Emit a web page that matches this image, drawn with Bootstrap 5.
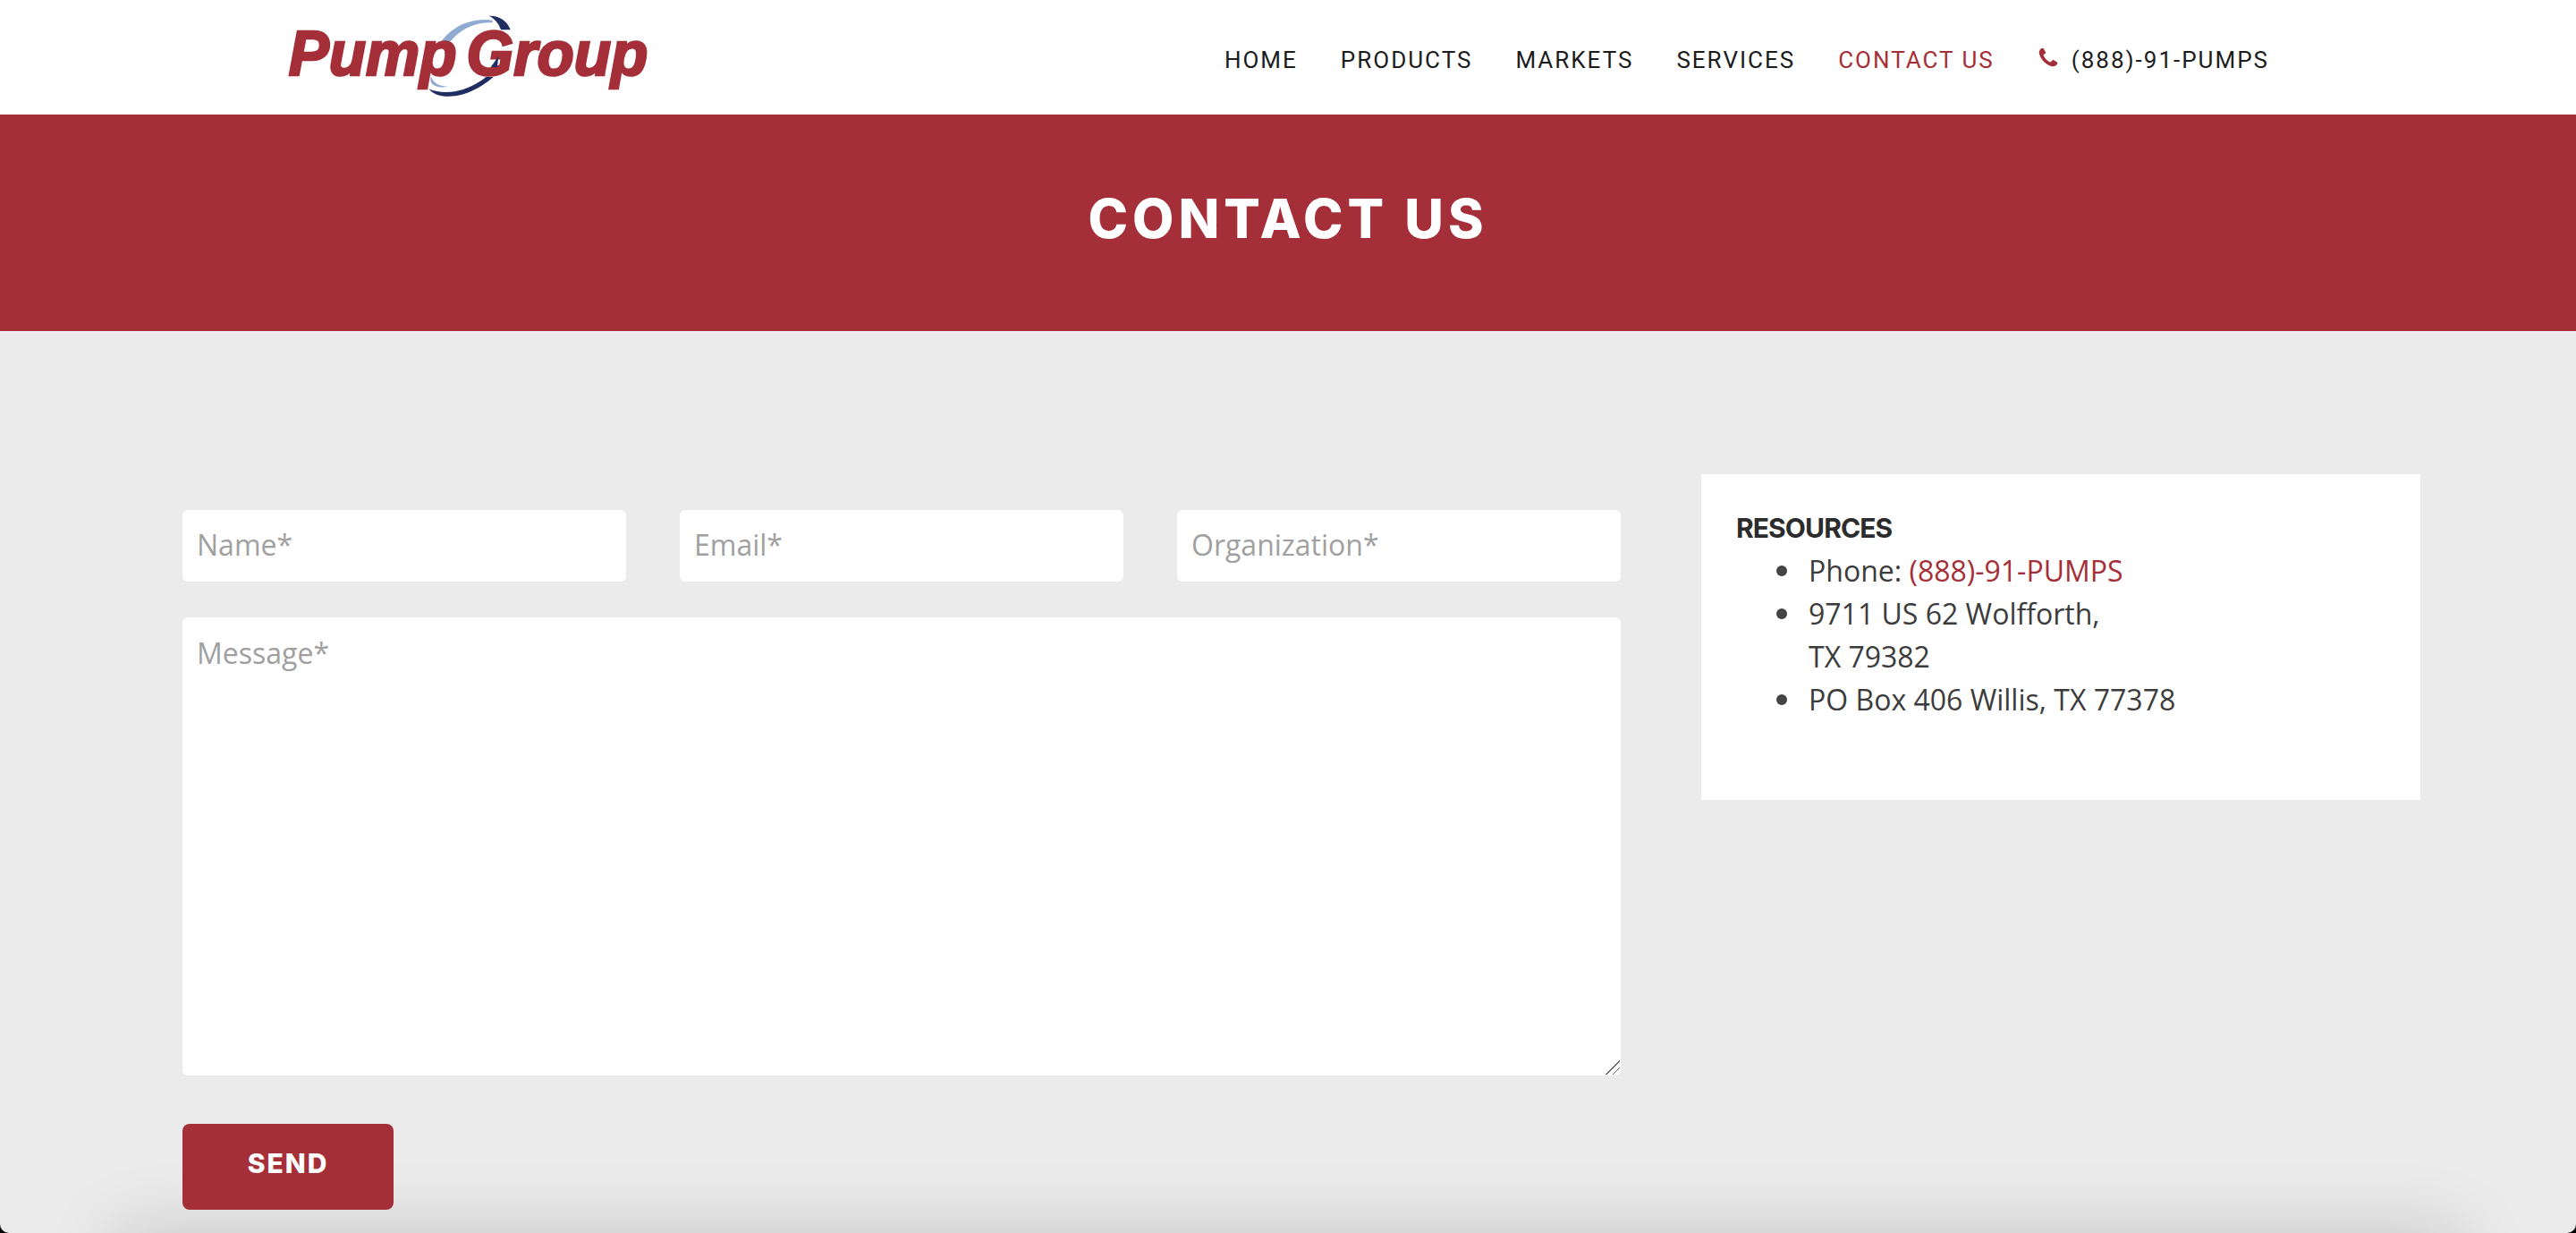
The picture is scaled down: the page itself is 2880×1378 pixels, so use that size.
<!DOCTYPE html>
<html lang="en">
<head>
<meta charset="utf-8">
<title>Contact Us - Pump Group</title>
<link href="https://cdn.jsdelivr.net/npm/bootstrap@5.3.0/dist/css/bootstrap.min.css" rel="stylesheet">
<style>
html, body { height: 100%; background: #000; overflow: hidden; }
.pg-page { height: 1378px; overflow: hidden; background: #ebebeb; border-radius: 0 0 10px 10px; font-family: "Open Sans", sans-serif; color: #3c3c3c; }
.pg-nav { height: 128px; padding: 0 343px 0 280px; background: #fff; }
.pg-nav .navbar-brand { padding: 0; margin: 0; display: block; height: 128px; }
.pg-logo { display: block; width: 500px; height: 128px; }
.pg-logo text { font-family: "Liberation Sans", sans-serif; font-weight: 700; font-style: italic; fill: #a52f38; stroke: #a52f38; stroke-width: 8px; font-size: 213px; word-spacing: -24px; }
.navbar-expand .navbar-nav .nav-item .nav-link { font-family: Roboto, sans-serif; font-size: 26px; letter-spacing: 2px; color: #1c1c1c; padding: 0 0 0 48px; line-height: 40px; margin-top: 6px; }
.navbar-expand .navbar-nav .nav-item .nav-link.active { color: #a52f38; }
.pg-phone { width: 24px; height: 26px; margin-right: 14px; fill: #a52f38; vertical-align: -2px; }
.pg-hero { height: 242px; background: #a52f38; color: #fff; padding-top: 86px; }
.pg-hero h1 { font-family: Inter, sans-serif; font-weight: 800; font-size: 60px; letter-spacing: 5px; line-height: 60px; margin: 0; }
.pg-main { height: 1008px; padding: 160px 174px 0 204px; }
.pg-formcol { width: 1608px; padding-top: 40px; }
.pg-fields { display: grid; grid-template-columns: repeat(3, 496px); column-gap: 60px; margin-bottom: 40px; }
.pg-page .form-control { border: 0; border-radius: 6px; font-size: 32px; line-height: 48px; padding: 14px 16px 18px; color: #333; }
.pg-page .form-control::placeholder { color: #a0a0a0; }
.pg-input { height: 80px; }
.pg-page .pg-area { height: 512px; padding-top: 16px; resize: none; background: #fff linear-gradient(135deg, transparent 50%, #666 50% 55%, transparent 55% 73%, #666 73% 78%, transparent 78%) no-repeat right 1px bottom 1px / 16px 16px; }
.pg-send { display: block; width: 236px; height: 96px; margin-top: 54px; padding-bottom: 14px; background: #a52f38; border: 0; border-radius: 8px; color: #fff; font-family: Inter, sans-serif; font-weight: 800; font-size: 30px; letter-spacing: 2px; }
.pg-info { width: 804px; height: 364px; margin-left: 90px; padding: 36px 41px; background: #fff; font-size: 32px; line-height: 48px; }
.pg-info h2 { font-family: Inter, sans-serif; font-weight: 700; font-size: 30px; line-height: 48px; letter-spacing: -.9px; color: #2c2c2c; margin: 0 0 0 -2px; }
.pg-info ul { margin: 0; padding-left: 79px; list-style: none; }
.pg-info li { position: relative; }
.pg-info li::before { content: ""; position: absolute; left: -36px; top: 18px; width: 12px; height: 12px; border-radius: 50%; background: #444; }
.pg-info a { color: #a52f38; text-decoration: none; }
.pg-footshade { height: 80px; margin: 0 130px; background: #333; box-shadow: 0 0 80px rgba(0,0,0,.17); }
</style>
</head>
<body>
<div class="pg-page">
  <nav class="navbar navbar-expand justify-content-between align-items-center pg-nav">
    <a class="navbar-brand" href="#" aria-label="Pump Group">
      <svg class="pg-logo" viewBox="0 0 1500 384" aria-hidden="true">
        <path d="M632 150C670 90 740 58 812 68L812 76C760 72 700 95 662 150Z" fill="#8fabd2"/>
        <path d="M800 53C835 52 862 70 872 100L840 100C835 85 825 65 800 53Z" fill="#1f2d63"/>
        <path d="M606 256C612 278 632 290 664 290C625 298 596 285 606 256Z" fill="#8fabd2"/>
        <path d="M598 298C660 325 740 300 790 258L815 258C720 340 625 335 598 298Z" fill="#1f2d63"/>
        <text x="128" y="252" textLength="1205" lengthAdjust="spacingAndGlyphs">Pump Group</text>
        <path d="M832 188L806 225L828 225Z" fill="#1f2d63"/>
      </svg>
    </a>
    <ul class="navbar-nav">
      <li class="nav-item"><a class="nav-link" href="#">HOME</a></li>
      <li class="nav-item"><a class="nav-link" href="#">PRODUCTS</a></li>
      <li class="nav-item"><a class="nav-link" href="#">MARKETS</a></li>
      <li class="nav-item"><a class="nav-link" href="#">SERVICES</a></li>
      <li class="nav-item"><a class="nav-link active" href="#">CONTACT US</a></li>
      <li class="nav-item"><a class="nav-link" href="#"><svg class="pg-phone" viewBox="0 0 1408 1792" aria-hidden="true"><path d="M1408 1240q0 27-10 70.5t-21 68.5q-21 50-122 106-94 51-186 51-27 0-53-3.5t-57.5-12.5-47-14.5-55.5-20.5-49-18q-98-35-175-83-127-79-264-216t-216-264q-48-77-83-175-3-9-18-49t-20.5-55.5-14.5-47-12.5-57.5-3.5-53q0-92 51-186 56-101 106-122 25-11 68.5-21t70.5-10q14 0 21 3 18 6 53 76 11 19 30 54t35 63.5 31 53.5q3 4 17.5 25t21.5 35.5 7 28.5q0 20-28.5 50t-62 55-62 53-28.5 46q0 9 5 22.5t8.5 20.5 14 24 11.5 19q76 137 174 235t235 174q2 1 19 11.5t24 14 20.5 8.5 22.5 5q18 0 46-28.5t53-62 55-62 50-28.5q14 0 28.5 7t35.5 21.5 25 17.5q25 15 53.5 31t63.5 35 54 30q70 35 76 53 3 7 3 21z"/></svg>(888)-91-PUMPS</a></li>
    </ul>
  </nav>
  <header class="pg-hero text-center"><h1>CONTACT US</h1></header>
  <main class="d-flex align-items-start pg-main">
    <form class="pg-formcol">
      <div class="pg-fields">
        <input class="form-control pg-input" type="text" placeholder="Name*">
        <input class="form-control pg-input" type="email" placeholder="Email*">
        <input class="form-control pg-input" type="text" placeholder="Organization*">
      </div>
      <textarea class="form-control pg-area" placeholder="Message*"></textarea>
      <button class="btn pg-send" type="button">SEND</button>
    </form>
    <aside class="pg-info">
      <h2>RESOURCES</h2>
      <ul>
        <li>Phone: <a href="#">(888)-91-PUMPS</a></li>
        <li>9711 US 62 Wolfforth,<br>TX 79382</li>
        <li>PO Box 406 Willis, TX 77378</li>
      </ul>
    </aside>
  </main>
  <div class="pg-footshade"></div>
</div>
<script src="https://cdn.jsdelivr.net/npm/bootstrap@5.3.0/dist/js/bootstrap.bundle.min.js"></script>
</body>
</html>
